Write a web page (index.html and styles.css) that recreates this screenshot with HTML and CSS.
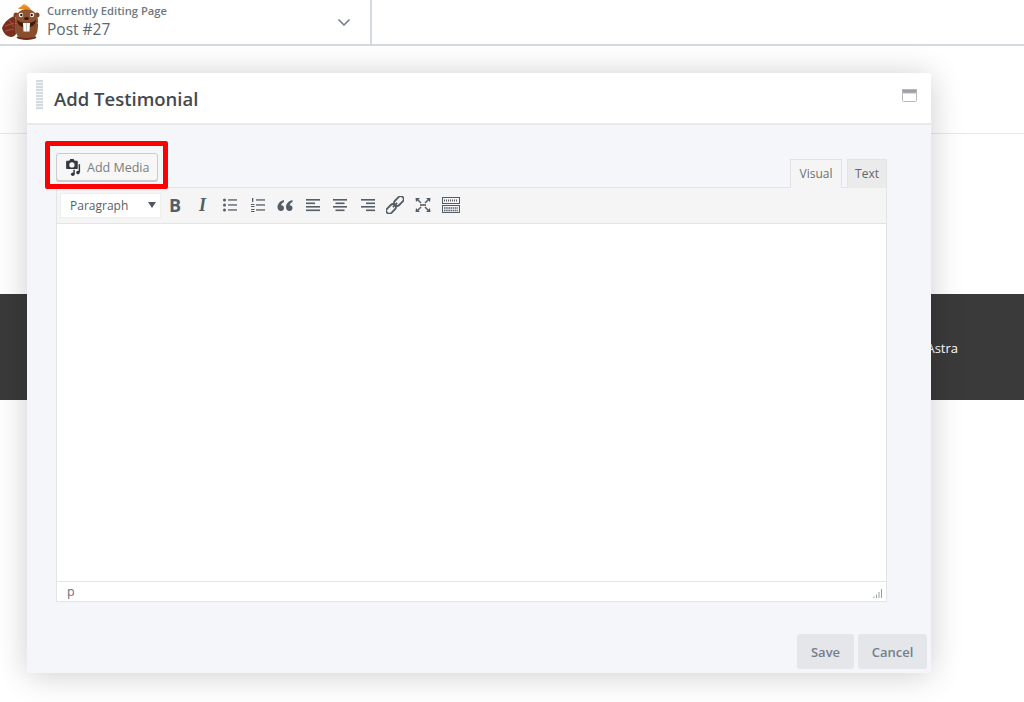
FILE: index.html
```html
<!DOCTYPE html>
<html lang="en">
<head>
<meta charset="utf-8">
<title>Add Testimonial</title>
<link rel="stylesheet" href="styles.css">
</head>
<body>
<header class="topbar">
  <div class="page-switch">
    <svg class="logo" width="40" height="40" viewBox="0 0 40 40">
      <path d="M15 14 C10 15 4 20 2 26 C3 31 7 35 11 35 C13 35 15 34 16 32 Z" fill="#7a2f1d"/>
      <path d="M5 24 L14 21 M5 29 L14 27 M9 18 L14 25" stroke="#a9604a" stroke-width=".8"/>
      <circle cx="16" cy="13" r="2.500" fill="#7d4426"/><circle cx="37" cy="13" r="2.500" fill="#7d4426"/>
      <ellipse cx="26.500" cy="19" rx="11.500" ry="12" fill="#8f5333"/>
      <path d="M15 22 C15 32 17 37 26.500 37 C36 37 38 32 38 22 Z" fill="#8a4d2e"/>
      <path d="M18 7 C20 3 29 2 31 8 C27 7 22 7 18 7 Z" fill="#e58c1e"/>
      <path d="M21 4 L24 2 L28 4 Z" fill="#f2a22a"/>
      <circle cx="21" cy="13" r="2.200" fill="#fff"/><circle cx="32" cy="13" r="2.200" fill="#fff"/>
      <circle cx="21.300" cy="13" r="1.200" fill="#2b140c"/><circle cx="31.700" cy="13" r="1.200" fill="#2b140c"/>
      <ellipse cx="26.500" cy="16.500" rx="2.500" ry="1.500" fill="#3b170e"/>
      <path d="M17 18 C21 22 32 22 36 18 C36 28 17 28 17 18 Z" fill="#40190f"/>
      <path d="M23 21 H30 L29.500 29.500 H23.500 Z" fill="#fff"/>
      <path d="M26.500 21 V29.500" stroke="#b9b0a8" stroke-width=".7"/>
      <path d="M17 35 C21 37.500 32 37.500 36 35" stroke="#6f2a1c" stroke-width="2" fill="none"/>
    </svg>
    <div class="page-text">
      <div class="page-label">Currently Editing Page</div>
      <div class="page-name">Post #27</div>
    </div>
    <svg class="chevron" width="14" height="9" viewBox="0 0 14 9"><path d="M1.500 1.500 L7 7 L12.500 1.500" fill="none" stroke="#6d7882" stroke-width="1.500"/></svg>
  </div>
</header>
<main class="page">
  <div class="rule"></div>
  <section class="band"><span class="band-text">Powered by Astra</span></section>
</main>

<div class="dialog">
  <div class="dialog-head">
    <div class="grip"></div>
    <h2 class="dialog-title">Add Testimonial</h2>
    <svg class="max-icon" width="15" height="13" viewBox="0 0 15 13"><rect x="0.500" y="0.500" width="14" height="12" rx="1" fill="#fff" stroke="#b5b9bd"/><rect x="0.500" y="0.500" width="14" height="3.500" fill="#9da1a5" stroke="#b5b9bd"/></svg>
  </div>
  <div class="dialog-body">
    <div class="editor-top">
      <button class="media-btn">
        <svg width="18" height="18" viewBox="1 0 15 17"><path d="M3 2.500 H5 L6 1 H9 L10 2.500 H12 C12.800 2.500 13 3 13 3.500 V9.500 C13 10.200 12.600 10.500 12 10.500 H3 C2.300 10.500 2 10.100 2 9.500 V3.500 C2 3 2.300 2.500 3 2.500 Z M7.500 4 A2.500 2.500 0 1 0 7.500 9 A2.500 2.500 0 1 0 7.500 4 Z" fill="#33383d" fill-rule="evenodd"/><path d="M14.500 6 V13.500 M9.500 11 V15" stroke="#33383d" stroke-width="1.400"/><circle cx="8.300" cy="15.300" r="1.700" fill="#33383d"/><circle cx="13.200" cy="13.800" r="1.700" fill="#33383d"/></svg>
        <span>Add Media</span>
      </button>
      <div class="tabs">
        <div class="tab tab-active">Visual</div>
        <div class="tab">Text</div>
      </div>
    </div>
    <div class="editor">
      <div class="toolbar">
        <div class="format-select"><span>Paragraph</span><i class="caret"></i></div>
        <div class="tools">
          <span class="tool glyph-b">B</span>
          <span class="tool glyph-i">I</span>
          <svg class="tool" viewBox="0 0 16 16"><g fill="#555d66"><circle cx="2.500" cy="3" r="1.500"/><circle cx="2.500" cy="8" r="1.500"/><circle cx="2.500" cy="13" r="1.500"/><rect x="6" y="2.300" width="9" height="1.300"/><rect x="6" y="7.300" width="9" height="1.300"/><rect x="6" y="12.300" width="9" height="1.300"/></g></svg>
          <svg class="tool" viewBox="0 0 16 16"><g fill="#555d66"><rect x="6" y="2.300" width="9" height="1.300"/><rect x="6" y="7.300" width="9" height="1.300"/><rect x="6" y="12.300" width="9" height="1.300"/><rect x="2" y="1" width="1.300" height="4"/><rect x="1" y="7" width="3.500" height="1"/><rect x="1" y="9" width="3.500" height="1"/><rect x="1" y="12" width="3.500" height="1"/><rect x="1" y="14" width="3.500" height="1"/></g></svg>
          <svg class="tool" viewBox="0 0 16 16"><path d="M7 3 C3 4 .500 7 .500 10 C.500 12.500 2 14 4 14 C5.700 14 7 12.800 7 11 C7 9.300 5.700 8.200 4 8.300 C4.500 6.800 5.700 5.500 7 5 Z M15.500 3 C11.500 4 9 7 9 10 C9 12.500 10.500 14 12.500 14 C14.200 14 15.500 12.800 15.500 11 C15.500 9.300 14.200 8.200 12.500 8.300 C13 6.800 14.200 5.500 15.500 5 Z" fill="#555d66"/></svg>
          <svg class="tool" viewBox="0 0 16 16"><g fill="#555d66"><rect x="1" y="2" width="14" height="1.600"/><rect x="1" y="5.500" width="9" height="1.600"/><rect x="1" y="9" width="14" height="1.600"/><rect x="1" y="12.500" width="14" height="1.600"/></g></svg>
          <svg class="tool" viewBox="0 0 16 16"><g fill="#555d66"><rect x="1" y="2" width="14" height="1.600"/><rect x="3.500" y="5.500" width="9" height="1.600"/><rect x="1" y="9" width="14" height="1.600"/><rect x="3.500" y="12.500" width="9" height="1.600"/></g></svg>
          <svg class="tool" viewBox="0 0 16 16"><g fill="#555d66"><rect x="1" y="2" width="14" height="1.600"/><rect x="6" y="5.500" width="9" height="1.600"/><rect x="1" y="9" width="14" height="1.600"/><rect x="6" y="12.500" width="9" height="1.600"/></g></svg>
          <svg class="tool tool-wide" viewBox="0 0 18 18"><g transform="rotate(-45 9 9)" fill="none" stroke="#555d66" stroke-width="1.800"><rect x="-2" y="6" width="11" height="6" rx="3"/><rect x="9" y="6" width="11" height="6" rx="3"/><path d="M6 9 H12"/></g></svg>
          <svg class="tool" viewBox="0 0 16 16"><g fill="#555d66"><path d="M0.500 1 H5 L3.500 2.500 L6.500 5.500 L5.500 6.500 L2.500 3.500 L1 5 Z"/><path d="M15.500 1 H11 L12.500 2.500 L9.500 5.500 L10.500 6.500 L13.500 3.500 L15 5 Z"/><path d="M0.500 15 H5 L3.500 13.500 L6.500 10.500 L5.500 9.500 L2.500 12.500 L1 11 Z"/><path d="M15.500 15 H11 L12.500 13.500 L9.500 10.500 L10.500 9.500 L13.500 12.500 L15 11 Z"/><rect x="5" y="7.200" width="6" height="1.600"/></g></svg>
          <svg class="tool tool-kbd" viewBox="0 0 18 16"><g fill="none" stroke="#555d66"><rect x="0.500" y="0.500" width="17" height="6"/><rect x="0.500" y="8.500" width="17" height="7"/><path d="M2 3.500 H16" stroke-dasharray="1 1" stroke-width="2"/><path d="M2 11 H16 M2 13.500 H16" stroke-dasharray="1.500 .7" stroke-width="1.400"/></g></svg>
        </div>
      </div>
      <div class="editor-area"></div>
      <div class="statusbar">
        <span class="path">p</span>
        <svg class="resize" width="10" height="11" viewBox="0 0 10 11"><path d="M1 10 V8.500 M3.500 10 V6.500 M6 10 V4 M8.500 10 V1" stroke="#9a9da0" stroke-width="1"/></svg>
      </div>
    </div>
  </div>
  <div class="dialog-foot">
    <button class="foot-btn">Save</button>
    <button class="foot-btn">Cancel</button>
  </div>
  <div class="highlight"></div>
</div>
</body>
</html>
```

FILE: styles.css
```css
* { box-sizing: border-box; }
html, body { margin: 0; padding: 0; }
body {
  width: 1024px;
  height: 702px;
  overflow: hidden;
  background: #fff;
  font-family: "Open Sans", "Noto Sans", sans-serif;
  position: relative;
}
.topbar {
  height: 46px;
  border-bottom: 2px solid #d5dadf;
}
.page-switch {
  width: 372px;
  height: 44px;
  border-right: 2px solid #d5dadf;
  display: flex;
  align-items: center;
  padding-right: 19px;
}
.logo { flex: none; margin: 0 7px 0 0; }
.page-text { flex: 1; padding-bottom: 3px; }
.page-label { font-size: 11.200px; line-height: 15px; font-weight: 600; color: #6d7882; }
.page-name { font-size: 15.500px; line-height: 20px; color: #5d6770; margin-top: 1px; }
.chevron { flex: none; }
.page { display: block; }
.rule { height: 1px; background: #e8e8e8; margin-top: 87px; }
.band {
  margin-top: 160px;
  height: 106px;
  background: #3a3a3a;
  color: #fff;
  font-size: 13px;
  display: flex;
  align-items: center;
  justify-content: flex-end;
  padding: 2px 66px 0 0;
  line-height: 20px;
}
.band-text { white-space: nowrap; }
.dialog {
  position: absolute;
  left: 27px;
  top: 73px;
  width: 904px;
  height: 600px;
  background: #f4f6f9;
  border-radius: 3px;
  box-shadow: 0 2px 32px rgba(0,0,0,.2);
  display: flex;
  flex-direction: column;
}
.dialog-head {
  height: 52px;
  flex: none;
  background: #fff;
  border-bottom: 2px solid #e9eaeb;
  border-radius: 3px 3px 0 0;
  display: flex;
  align-items: center;
  position: relative;
}
.grip {
  width: 7px;
  height: 30px;
  margin: 7px 0 0 9px;
  align-self: flex-start;
  background: repeating-linear-gradient(to bottom, #d5dadf 0 2px, #f6f7f9 2px 3px);
}
.dialog-title {
  margin: 1px 0 0 11px;
  font-size: 18.500px;
  line-height: 24px;
  font-weight: 600;
  color: #45494d;
  flex: 1;
}
.max-icon { margin: 0 14px 6px 0; flex: none; }
.dialog-body { flex: 1; padding: 28px 44px 0 29px; }
.editor-top {
  height: 34px;
  display: flex;
  justify-content: space-between;
  align-items: flex-end;
}
.media-btn {
  align-self: flex-start;
  width: 102px;
  height: 28px;
  display: flex;
  align-items: center;
  gap: 5px;
  padding: 0 0 0 7px;
  background: #f7f7f7;
  border: 1px solid #ccc;
  border-radius: 3px;
  box-shadow: 0 1px 0 #ccc;
  font: 12.500px "Open Sans", sans-serif;
  color: #777d82;
}
.tabs { display: flex; gap: 5px; margin-bottom: -1px; position: relative; }
.tab {
  height: 29px;
  width: 40px;
  font-size: 12px;
  line-height: 28px;
  text-align: center;
  color: #666;
  background: #ebebeb;
  border: 1px solid #e2e4e7;
  border-bottom: 0;
}
.tab-active {
  width: 52px;
  background: #f5f5f5;
  border-color: #e2e2e2;
  color: #6b7176;
}
.editor {
  width: 831px;
  height: 415px;
  border: 1px solid #e2e4e7;
  background: #fff;
  display: flex;
  flex-direction: column;
}
.toolbar {
  height: 36px;
  flex: none;
  background: #f5f5f5;
  border-bottom: 1px solid #e2e4e7;
  display: flex;
  align-items: center;
  padding: 0 0 1px 3px;
}
.format-select {
  width: 101px;
  height: 25px;
  background: #fff;
  border: 1px solid #eee;
  display: flex;
  align-items: center;
  justify-content: space-between;
  padding: 0 4px 0 9px;
  font-size: 12px;
  color: #595f64;
}
.caret {
  width: 0;
  height: 0;
  border-left: 4.500px solid transparent;
  border-right: 4.500px solid transparent;
  border-top: 6px solid #50575e;
}
.tools {
  display: flex;
  align-items: center;
  gap: 11.500px;
  margin-left: 6px;
}
.tool {
  width: 16px;
  height: 16px;
  flex: none;
  display: block;
}
.tool-wide { width: 18px; height: 18px; margin: 0 -1px; }
.tool-kbd { width: 18px; height: 16px; margin-left: 0; }
.glyph-b, .glyph-i {
  color: #555d66;
  text-align: center;
}
.glyph-b { font: 700 18px/16px "Open Sans", sans-serif; }
.glyph-i { font: italic 700 18px/16px "Liberation Serif", serif; }
.editor-area { flex: 1; background: #fff; }
.statusbar {
  height: 20px;
  flex: none;
  border-top: 1px solid #e2e4e7;
  display: flex;
  align-items: center;
  justify-content: space-between;
  padding: 0 3px 0 10px;
  font-size: 12.500px;
  color: #6b6f73;
}
.resize { margin-top: 4px; }
.dialog-foot {
  flex: none;
  height: 39px;
  display: flex;
  justify-content: flex-end;
  gap: 4px;
  padding: 0 4px 4px 0;
}
.foot-btn {
  height: 35px;
  padding: 0;
  width: 57px;
  background: #e4e6e9;
  border: 0;
  border-radius: 3px;
  font: 600 13px "Open Sans", sans-serif;
  color: #757e8c;
}
.foot-btn:last-child { width: 69px; }
.highlight {
  position: absolute;
  left: 18px;
  top: 68px;
  width: 123px;
  height: 48px;
  border: 5px solid #ff0000;
  border-radius: 2px;
}
```
